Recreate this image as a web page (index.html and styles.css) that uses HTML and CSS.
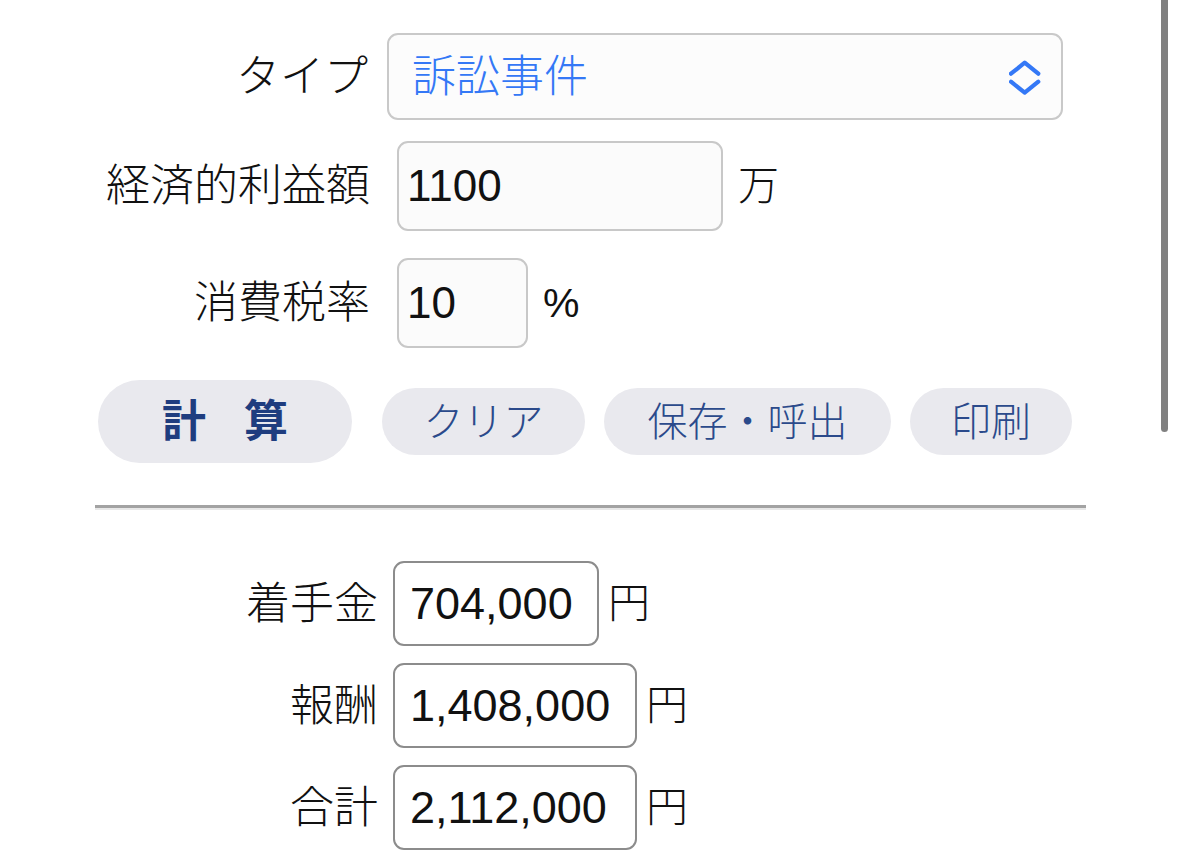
FILE: index.html
```html
<!DOCTYPE html>
<html lang="ja">
<head>
<meta charset="utf-8">
<title>弁護士費用計算</title>
<link rel="stylesheet" href="styles.css">
</head>
<body>
<div class="page">
  <div class="row row-type">
    <label class="lbl lbl-type">タイプ</label>
    <div class="select">
      <span class="select-text">訴訟事件</span>
      <svg class="chevron" width="32" height="36" viewBox="0 0 32 36" aria-hidden="true">
        <polyline points="2,14.7 15.7,3.7 29.3,14.7" fill="none" stroke="#3478f6" stroke-width="4.2" stroke-linecap="round" stroke-linejoin="round"/>
        <polyline points="2,22.7 15.7,33.7 29.3,22.7" fill="none" stroke="#3478f6" stroke-width="4.2" stroke-linecap="round" stroke-linejoin="round"/>
      </svg>
    </div>
  </div>
  <div class="row row-amount">
    <label class="lbl">経済的利益額</label>
    <input class="field field-amount" type="text" value="1100">
    <span class="unit">万</span>
  </div>
  <div class="row row-tax">
    <label class="lbl">消費税率</label>
    <input class="field field-tax" type="text" value="10">
    <span class="unit">%</span>
  </div>
  <div class="buttons">
    <button class="btn btn-calc">計算</button>
    <button class="btn btn-clear">クリア</button>
    <button class="btn btn-save">保存・呼出</button>
    <button class="btn btn-print">印刷</button>
  </div>
  <hr class="divider">
  <div class="results">
    <div class="res-row">
      <span class="res-lbl">着手金</span>
      <input class="out out-short" type="text" value="704,000" readonly>
      <span class="res-unit">円</span>
    </div>
    <div class="res-row">
      <span class="res-lbl">報酬</span>
      <input class="out out-long" type="text" value="1,408,000" readonly>
      <span class="res-unit">円</span>
    </div>
    <div class="res-row">
      <span class="res-lbl">合計</span>
      <input class="out out-long" type="text" value="2,112,000" readonly>
      <span class="res-unit">円</span>
    </div>
  </div>
</div>
<div class="scrollbar"></div>
</body>
</html>
```
FILE: styles.css
```css
html, body {
  margin: 0;
  padding: 0;
  background: #ffffff;
}

body {
  font-family: "Liberation Sans", "Noto Sans CJK JP", sans-serif;
  font-weight: 300;
  color: #111111;
  width: 1178px;
  height: 866px;
  overflow: hidden;
}

.page {
  padding-top: 33px;
}

.row {
  display: flex;
  align-items: center;
}

.lbl {
  width: 370px;
  text-align: right;
  font-size: 44px;
  line-height: 1;
  flex: none;
}

.lbl-type {
  width: 368px;
}

.row-type {
  height: 87px;
  gap: 19px;
}

.select {
  box-sizing: border-box;
  width: 676px;
  height: 87px;
  border: 2px solid #c9c9c9;
  border-radius: 11px;
  background: #fcfcfc;
  display: flex;
  align-items: center;
  justify-content: space-between;
  padding: 0 20px 0 23px;
}

.select-text {
  color: #3478f6;
  font-size: 44px;
  line-height: 1;
}

.chevron {
  display: block;
}

.row-amount {
  margin-top: 21px;
  height: 90px;
  gap: 27px;
}

.row-tax {
  margin-top: 27px;
  height: 90px;
  gap: 27px;
}

.field {
  box-sizing: border-box;
  height: 90px;
  border: 2px solid #c8c8c8;
  border-radius: 11px;
  background: #fbfbfb;
  font-family: "Liberation Sans", "Noto Sans CJK JP", sans-serif;
  font-size: 44px;
  color: #111111;
  padding: 0 0 0 8px;
  margin: 0;
  outline: none;
}

.field-amount {
  width: 326px;
}

.field-tax {
  width: 131px;
}

.unit {
  font-size: 41px;
  margin-left: -12px;
  line-height: 1;
}

.buttons {
  margin-top: 32px;
  padding-left: 98px;
  display: flex;
  align-items: center;
  gap: 19px;
}

.btn {
  box-sizing: border-box;
  border: none;
  background: #e9e9ee;
  color: #2b4a8b;
  font-family: "Liberation Sans", "Noto Sans CJK JP", sans-serif;
  font-weight: 300;
  font-size: 40px;
  height: 67px;
  border-radius: 34px;
  padding: 0;
  margin: 0;
  line-height: 1;
}

.btn-calc {
  width: 254px;
  height: 83px;
  border-radius: 42px;
  font-size: 44px;
  font-weight: 700;
  letter-spacing: 38px;
  text-indent: 38px;
  color: #1f3d7f;
  margin-right: 11px;
}

.btn-clear {
  width: 203px;
}

.btn-save {
  width: 287px;
}

.btn-print {
  width: 162px;
}

.divider {
  margin: 42px 0 0 95px;
  width: 991px;
  height: 0;
  border: none;
  border-top: 3px solid #a3a3a3;
  border-bottom: 2px solid #e8e8e8;
}

.results {
  margin-top: 51px;
  display: flex;
  flex-direction: column;
  gap: 17px;
}

.res-row {
  display: flex;
  align-items: center;
  height: 85px;
}

.res-lbl {
  width: 378px;
  text-align: right;
  font-size: 44px;
  line-height: 1;
  flex: none;
  margin-right: 15px;
}

.out {
  box-sizing: border-box;
  height: 85px;
  border: 2px solid #8c8c8c;
  border-radius: 11px;
  background: #ffffff;
  font-family: "Liberation Sans", "Noto Sans CJK JP", sans-serif;
  font-size: 45px;
  color: #111111;
  padding: 0 0 0 15px;
  margin: 0;
  outline: none;
}

.out-short {
  width: 206px;
}

.out-long {
  width: 244px;
}

.res-unit {
  font-size: 42px;
  line-height: 1;
  margin-left: 9px;
}

.scrollbar {
  position: fixed;
  top: 0;
  right: 10px;
  width: 7px;
  height: 432px;
  background: #808080;
  border-radius: 0 0 4px 4px;
}
```
